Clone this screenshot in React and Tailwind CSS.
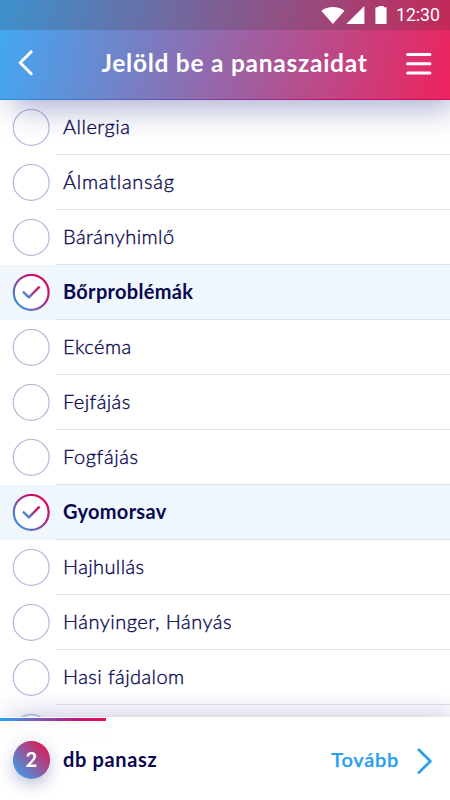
import React from "react";

const complaints = [
  { name: "Allergia", tracking: "tracking-[0.5px]" },
  { name: "Álmatlanság", tracking: "tracking-[0.75px]" },
  { name: "Bárányhimlő", tracking: "tracking-[0.45px]" },
  { name: "Bőrproblémák", tracking: "tracking-[0.3px]", selected: true },
  { name: "Ekcéma", tracking: "tracking-[0.5px]" },
  { name: "Fejfájás", tracking: "tracking-[0.4px]" },
  { name: "Fogfájás", tracking: "tracking-[0.6px]" },
  { name: "Gyomorsav", tracking: "tracking-[0.3px]", selected: true },
  { name: "Hajhullás", tracking: "tracking-[0.4px]" },
  { name: "Hányinger, Hányás", tracking: "tracking-[0.5px]" },
  { name: "Hasi fájdalom", tracking: "tracking-[0.42px]" },
  { name: "", tracking: "" },
];

function StatusBar() {
  return (
    <div className="flex h-[30px] items-center justify-end bg-[#303030]/20 pr-[10px] text-white">
      <svg width="67" height="20" viewBox="0 0 67 20" fill="currentColor" className="mr-[8px]">
        <path d="M.3 5.7C6.7.8 17.1.8 23.5 5.7L11.9 19Z" />
        <path d="M43.4 1v18h-18Z" />
        <path d="M57.6 1h5.2v1.2h2c.5 0 .8.3.8.8v15.2c0 .5-.3.8-.8.8H55.2c-.5 0-.8-.3-.8-.8V3c0-.5.3-.8.8-.8h2.4Z" />
      </svg>
      <span className="font-[Roboto,sans-serif] text-[17.7px] leading-[30px]">12:30</span>
    </div>
  );
}

function Header() {
  return (
    <header className="relative z-10 h-[100px] shrink-0 bg-[linear-gradient(102deg,#40a9f4_0%,#ed235d_100%)] shadow-[8px_14px_28px_-4px_rgba(30,35,130,0.34)]">
      <StatusBar />
      <div className="flex h-[69px] items-center justify-between pr-[18px] pl-[17px] text-white">
        <svg width="18" height="28" viewBox="0 0 18 28" fill="none" stroke="currentColor" strokeWidth="3" strokeLinecap="round" strokeLinejoin="round" className="-mt-1">
          <path d="M14.2 2.7 3.2 13.7 14.2 24.7" />
        </svg>
        <h1 className="-mt-1 ml-[28px] text-[24.5px] leading-[30px] font-bold tracking-[0.74px] whitespace-nowrap">Jelöld be a panaszaidat</h1>
        <svg width="26" height="24" viewBox="0 0 26 24" fill="none" stroke="currentColor" strokeWidth="3" strokeLinecap="round" className="-mt-px">
          <path d="M1.6 2.4h22.3M1.6 11.7h22.3M1.6 21h22.3" />
        </svg>
      </div>
      <div className="h-px bg-[linear-gradient(90deg,#1b93e2,#b80c78_75%,#dc0650)]" />
    </header>
  );
}

function Check({ selected }) {
  if (!selected) {
    return (
      <svg width="38" height="37" viewBox="0 0 38 37" className="shrink-0">
        <circle cx="19.2" cy="18.4" r="17.9" fill="none" stroke="#b3b8dc" strokeWidth="1.2" />
      </svg>
    );
  }
  return (
    <svg width="38" height="37" viewBox="-.7 0 38 37" fill="none" className="shrink-0">
      <defs>
        <linearGradient id="ring" x1="4" y1="32" x2="32" y2="6" gradientUnits="userSpaceOnUse">
          <stop stopColor="#3995df" />
          <stop offset=".75" stopColor="#c01475" />
          <stop offset="1" stopColor="#de0758" />
        </linearGradient>
        <linearGradient id="tick" x1="11" y1="22" x2="26" y2="13" gradientUnits="userSpaceOnUse">
          <stop stopColor="#3995df" />
          <stop offset="1" stopColor="#e30855" />
        </linearGradient>
      </defs>
      <circle cx="18.5" cy="18.4" r="17.4" fill="white" stroke="url(#ring)" strokeWidth="2.2" />
      <path d="m11 18.4 5.2 4.9 9.9-9.9" stroke="url(#tick)" strokeWidth="2.5" strokeLinecap="round" strokeLinejoin="round" />
    </svg>
  );
}

function Row({ item }) {
  return (
    <li className={item.selected ? "flex h-[55px] shrink-0 items-stretch bg-[#eff7fc] pl-3" : "flex h-[55px] shrink-0 items-stretch pl-3"}>
      <div className="flex w-[44px] items-center">
        <Check selected={item.selected} />
      </div>
      <div className="flex flex-1 items-center border-b border-[#dfe1f0] pb-px pl-[7px]">
        <span className={`-mt-px text-[20px] leading-6 whitespace-nowrap text-[#090850] ${item.tracking} ${item.selected ? "font-bold" : "font-light [-webkit-text-stroke:0.35px_#090850]"}`}>{item.name}</span>
      </div>
    </li>
  );
}

function Footer() {
  return (
    <footer className="relative z-10 h-[83px] shrink-0 bg-white shadow-[6px_-6px_26px_-2px_rgba(30,35,130,0.22)]">
      <div className="h-full w-full pt-px">
        <div className="h-[3px] w-[106px] bg-[linear-gradient(90deg,#2aa4f3,#c01680_70%,#ee0b50)] shadow-[0_8px_24px_rgba(30,35,130,0.1)]" />
        <div className="flex h-[78px] items-center pr-[16px] pl-[12.5px] text-[20px] leading-6 text-[#090850]">
          <span className="flex size-[37.5px] items-center justify-center rounded-full bg-[linear-gradient(45deg,#3ca1ed_8%,#e2144f_92%)] pb-0.5 font-bold text-white shadow-[0_6px_16px_rgba(30,35,130,0.28)]">2</span>
          <span className="-mt-0.5 ml-[13px] font-bold tracking-[0.65px]">db panasz</span>
          <span className="-mt-0.5 ml-auto font-semibold tracking-[0.7px] text-[#28a0ee] [-webkit-text-stroke:0.25px_#28a0ee]">Tovább</span>
          <svg width="18" height="28" viewBox="0 0 18 28" fill="none" stroke="#28a0ee" strokeWidth="2.7" strokeLinecap="round" strokeLinejoin="round" className="ml-[17px]">
            <path d="M2.8 3.8 14.4 15.2 2.8 26.6" />
          </svg>
        </div>
      </div>
    </footer>
  );
}

export default function App() {
  return (
    <div className="flex h-[800px] w-[450px] flex-col overflow-hidden bg-white font-[Lato,sans-serif]">
      <Header />
      <ul className="flex min-h-0 flex-1 flex-col overflow-hidden">
        {complaints.map((item, i) => (
          <Row key={i} item={item} />
        ))}
      </ul>
      <Footer />
    </div>
  );
}
